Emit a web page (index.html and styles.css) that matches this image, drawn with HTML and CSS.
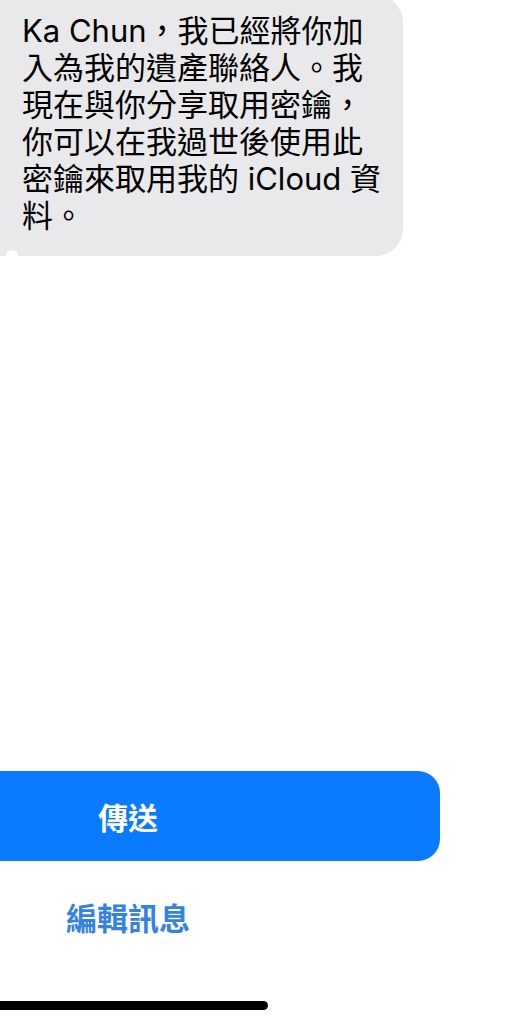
FILE: index.html
```html
<!DOCTYPE html>
<html lang="zh-Hant">

<head>
    <meta charset="UTF-8">
    <meta name="viewport" content="width=device-width, initial-scale=1.0">
    <title>遺產聯絡人</title>
    <link rel="stylesheet" href="styles.css">
</head>

<body>
    <div class="thread">
        <div class="bubble">Ka Chun，我已經將你加入為我的遺產聯絡人。我現在與你分享取用密鑰，你可以在我過世後使用此密鑰來取用我的 iCloud 資料。</div>
    </div>

    <div class="actions">
        <button type="button" class="send">傳送</button>
        <button type="button" class="edit">編輯訊息</button>
        <div class="home-bar"></div>
    </div>
</body>

</html>
```

FILE: styles.css
```css
body {
    margin: 0;
    width: 520px;
    height: 1024px;
    overflow: hidden;
    background: #fff;
    display: flex;
    flex-direction: column;
    font-family: "Inter", "Noto Sans CJK TC", sans-serif;
}

.thread {
    flex: 1;
}

.bubble {
    position: relative;
    width: 360px;
    margin: -5px 0 0 -30px;
    padding: 17px 21px 22px 52px;
    border-radius: 27px;
    background: #e9e9eb;
    color: #000;
    font-size: 31px;
    line-height: 37px;
}

/* little notch where the tail meets the bubble */
.bubble::after {
    content: "";
    position: absolute;
    left: 36px;
    bottom: -6px;
    width: 12px;
    height: 12px;
    border-radius: 50%;
    background: #fff;
}

.actions {
    width: 624px;
    margin-left: -184px;
    display: flex;
    flex-direction: column;
    align-items: center;
    padding-bottom: 14px;
}

.actions button {
    border: none;
    background: none;
    font-family: "Noto Sans CJK TC", sans-serif;
    cursor: pointer;
}

.send {
    width: 100%;
    height: 90px;
    border-radius: 22px;
    background: #0a7bff !important;
    color: #fff;
    font-size: 30px;
    font-weight: 700;
}

.edit {
    margin-top: 36px;
    height: 40px;
    line-height: 40px;
    padding: 0;
    color: #3483e0;
    font-size: 31px;
    font-weight: 700;
}

.home-bar {
    width: 280px;
    height: 9px;
    margin-top: 64px;
    border-radius: 5px;
    background: #000;
}
```
